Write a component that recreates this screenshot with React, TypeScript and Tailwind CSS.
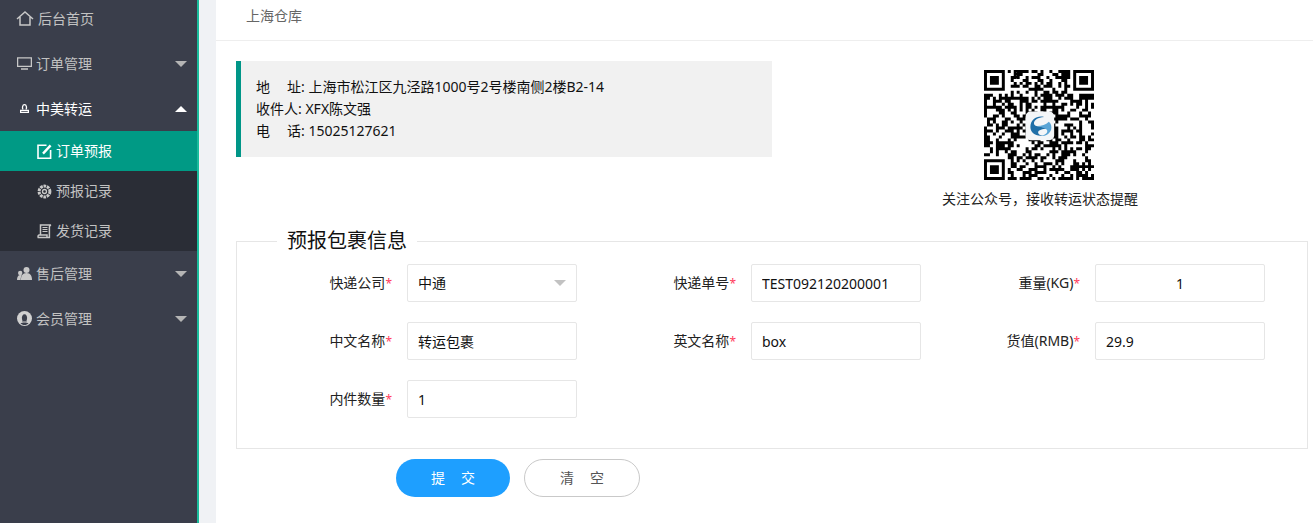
import React from "react";

const fontStack = "font-['Noto_Sans','Noto_Sans_CJK_SC',sans-serif]";

// qr code modules, finder squares are fixed and the rest is filled from a small seed
function qrPath() {
  const size = 37;
  let seed = 20200921;
  let d = "";
  const inFinder = (x: number, y: number) =>
    (x < 8 && y < 8) || (x >= size - 8 && y < 8) || (x < 8 && y >= size - 8);
  for (let y = 0; y < size; y++) {
    for (let x = 0; x < size; x++) {
      seed = (seed * 1103515245 + 12345) & 0x7fffffff;
      if (!inFinder(x, y) && (seed >> 16) % 100 < 55) d += `M${x} ${y}h1v1h-1z`;
    }
  }
  return d;
}

function Finder({ x, y }: { x: number; y: number }) {
  return <path d={`M${x} ${y}h7v7h-7zM${x + 1} ${y + 1}v5h5v-5zM${x + 2} ${y + 2}h3v3h-3z`} fillRule="evenodd" />;
}

function QrCode() {
  return (
    <svg viewBox="0 0 37 37" className="w-[110px] h-[110px] mr-[3px]" fill="#000">
      <path d={qrPath()} />
      <Finder x={0} y={0} />
      <Finder x={30} y={0} />
      <Finder x={0} y={30} />
      <rect x="14" y="14" width="9.6" height="9.6" rx="1.6" fill="#f4f6f8" />
      <path d="M15.6 19.2c0-2.6 2.4-4 4.6-3.4-2 .1-3.4 1-3.4 2.2 0 1.4 3.4.8 4.8 1.8-1-.2-3.4.2-3.4 1.2 0 .6.8 1 1.6 1-2.3.4-4.2-.8-4.2-2.8z" fill="#1f6fa8" />
      <path d="M21.8 17.4c.8.6 1 1.6.8 2.6-.5 1.6-2.2 2.4-3.8 2.2 1.8-.2 2.8-1 2.4-2-.6-.8-2-1-3.2-1.4 1.4 0 2.8-.4 3.8-1.4z" fill="#5aa5d6" />
    </svg>
  );
}

function Triangle({ up, color = "#b5b5b5" }: { up?: boolean; color?: string }) {
  return up ? (
    <svg viewBox="0 0 12 6" className="w-3 h-[6px]" fill={color}>
      <path d="M6 0l6 6H0z" />
    </svg>
  ) : (
    <svg viewBox="0 0 12 6" className="w-3 h-[6px]" fill={color}>
      <path d="M0 0h12L6 6z" />
    </svg>
  );
}

function HomeIcon() {
  return (
    <svg viewBox="0 0 18 15" className="w-[18px] h-[15px] -ml-px" fill="none" stroke="#c8c8c8" strokeWidth="1.5">
      <path d="M1 8l8-7 8 7M4 6v8h10V6" />
    </svg>
  );
}

function MonitorIcon() {
  return (
    <svg viewBox="0 0 15 13" className="w-[15px] h-[13px]" fill="none" stroke="#c8c8c8" strokeWidth="1.3">
      <path d="M.6.8h13.8v8.6H.6zM4 12h7" />
    </svg>
  );
}

function StampIcon() {
  return (
    <svg viewBox="0 0 9 9" className="w-[9px] h-[9px]" fill="none" stroke="#fff" strokeWidth="1.3">
      <path d="M3 5.500C2 4 2.400.7 4.500.7S7 4 6 5.500" />
      <path d="M.6 6.300h7.800v2H.6z" />
    </svg>
  );
}

function EditIcon() {
  return (
    <svg viewBox="0 0 15 15" className="w-[15px] h-[15px]" fill="none" stroke="#fff" strokeWidth="1.6">
      <path d="M9.500 1.200H1v13h12.600V6" />
      <path d="M6 9.600L13.600 1.400" strokeWidth="2.400" />
    </svg>
  );
}

function GearIcon() {
  return (
    <svg viewBox="0 0 15 15" className="w-[15px] h-[15px]" fill="none" stroke="#c8c8c8">
      <circle cx="7.500" cy="7.500" r="5.400" strokeWidth="3" strokeDasharray="2.600 .8" />
      <circle cx="7.500" cy="7.500" r="2" strokeWidth="1.300" />
    </svg>
  );
}

function ScrollIcon() {
  return (
    <svg viewBox="0 0 15 15" className="w-[15px] h-[15px]" fill="none" stroke="#c8c8c8" strokeWidth="1.500">
      <path d="M3.500 11V1h10.500c-1.200.4-1.600 1-1.600 2v10.500H1.200c-.4-1.400 0-2.400.8-2.500H10v2" />
      <path d="M5.500 3.500h5M5.500 5.500h5M5.500 7.500h5" strokeWidth="1.200" />
    </svg>
  );
}

function PeopleIcon() {
  return (
    <svg viewBox="0 0 15 13" className="w-[15px] h-[13px]" fill="#c8c8c8">
      <circle cx="9.500" cy="3" r="3" />
      <path d="M4 13c-.3-4 1.500-7 5.500-7s5.500 3 5.500 7z" />
      <circle cx="3.200" cy="6" r="2.200" />
      <path d="M0 13c0-3 1-5 3.400-5 .6 0 1 .1 1.400.3C4 9.800 3.600 11.200 3.700 13z" />
    </svg>
  );
}

function MemberIcon() {
  return (
    <svg viewBox="0 0 15 15" className="w-[15px] h-[15px]">
      <circle cx="7.500" cy="7.500" r="7.500" fill="#d0d0d0" />
      <path d="M5 10.500c.8-.8.4-1.200 0-2.200-.6-3 .8-5 2.500-5s3.100 2 2.500 5c-.4 1-.8 1.400 0 2.200z" fill="#3a3e4b" />
      <path d="M3.500 12.500c1-.8 2.200-1 4-1s3 .2 4 1c-1 .8-2.400 1.500-4 1.500s-3-.7-4-1.500z" fill="#3a3e4b" />
    </svg>
  );
}

function MenuItem({ icon, label, open, active, iconBox = "w-[19px]" }: { icon: React.ReactNode; label: string; open?: boolean; active?: boolean; iconBox?: string }) {
  return (
    <div className={`h-[45px] flex items-center pl-[17px] pr-[10px] text-sm ${active ? "text-white" : "text-[#c2c2c2]"}`}>
      <span className={`${iconBox} flex items-center justify-start shrink-0`}>{icon}</span>
      <span className="flex-1">{label}</span>
      {open === undefined ? null : <Triangle up={open} color={open ? "#fff" : "#b5b5b5"} />}
    </div>
  );
}

function SubItem({ icon, label, active }: { icon: React.ReactNode; label: string; active?: boolean }) {
  return (
    <div className={`h-10 flex items-center pl-[37px] gap-1 text-sm ${active ? "bg-[#009a85] text-white" : "text-[#c2c2c2]"}`}>
      {icon}
      <span>{label}</span>
    </div>
  );
}

function Sidebar() {
  return (
    <aside className="w-[199px] shrink-0 h-full bg-[#3a3e4b] border-r-2 border-[#1abc9c] overflow-hidden">
      <div className="-mt-1">
        <MenuItem icon={<HomeIcon />} label="后台首页" iconBox="w-[21px]" />
        <MenuItem icon={<MonitorIcon />} label="订单管理" open={false} />
        <MenuItem icon={<span className="pl-[3px] flex"><StampIcon /></span>} label="中美转运" open active />
        <div className="bg-[#2a2d36]">
          <SubItem icon={<EditIcon />} label="订单预报" active />
          <SubItem icon={<GearIcon />} label="预报记录" />
          <SubItem icon={<ScrollIcon />} label="发货记录" />
        </div>
        <MenuItem icon={<PeopleIcon />} label="售后管理" open={false} />
        <MenuItem icon={<MemberIcon />} label="会员管理" open={false} />
      </div>
    </aside>
  );
}

function Field({ label, value, select, center }: { label: string; value?: string; select?: boolean; center?: boolean }) {
  return (
    <div className="flex items-center">
      <label className="w-[115px] text-right text-sm text-[#222] mr-[15px]">
        {label}
        <span className="text-xs text-[#ff3b5c]">*</span>
      </label>
      {select ? (
        <div className="w-[170px] h-[38px] border border-[#e6e6e6] rounded-[2px] pl-[10px] pr-[10px] flex items-center justify-between text-sm text-[#111]">
          <span>{value}</span>
          <Triangle color="#c2c2c2" />
        </div>
      ) : (
        <input
          readOnly
          value={value}
          className={`w-[170px] h-[38px] border border-[#e6e6e6] rounded-[2px] px-[10px] text-sm text-[#111] outline-none ${center ? "text-center" : ""}`}
        />
      )}
    </div>
  );
}

function InfoLine({ a, b, value }: { a: string; b?: string; value: string }) {
  return (
    <div>
      {a}
      {b ? <span className="inline-block w-[17px]" /> : null}
      {b}: {value}
    </div>
  );
}

export default function App() {
  return (
    <div className={`h-[523px] w-[1313px] flex overflow-hidden bg-white ${fontStack}`}>
      <Sidebar />
      <div className="w-[17px] shrink-0 bg-[#f0f2f5]" />
      <main className="flex-1 min-w-0">
        <div className="h-[41px] border-b border-[#eeeeee] pl-[30px] pt-[5px] text-sm leading-[22px] text-[#666]">上海仓库</div>
        <div className="pl-5 pr-[5px]">
          <div className="flex mt-5">
            <div className="w-[536px] h-[96px] border-l-[5px] border-[#009688] bg-[#f1f1f1] pl-[15px] py-[15px] text-sm leading-[22px] text-[#111]">
              <InfoLine a="地" b="址" value="上海市松江区九泾路1000号2号楼南侧2楼B2-14" />
              <InfoLine a="收件人" value="XFX陈文强" />
              <InfoLine a="电" b="话" value="15025127621" />
            </div>
            <div className="flex-1 flex flex-col items-center pt-[9px]">
              <QrCode />
              <p className="mt-[9px] text-sm leading-5 text-[#222]">关注公众号，接收转运状态提醒</p>
            </div>
          </div>
          <fieldset className="mt-[18px] h-[222px] border border-[#e6e6e6]">
            <legend className="ml-10 px-[10px] text-[20px] leading-7 text-[#111]">预报包裹信息</legend>
            <div className="grid grid-cols-[344px_344px_1fr] gap-y-5 pl-[40px] pt-[9px]">
              <Field label="快递公司" value="中通" select />
              <Field label="快递单号" value="TEST092120200001" />
              <Field label="重量(KG)" value="1" center />
              <Field label="中文名称" value="转运包裹" />
              <Field label="英文名称" value="box" />
              <Field label="货值(RMB)" value="29.9" />
              <Field label="内件数量" value="1" />
            </div>
          </fieldset>
          <div className="flex gap-[14px] ml-[160px] mt-[10px]">
            <button className="w-[114px] h-[38px] rounded-full bg-[#1e9fff] text-white text-sm flex items-center justify-center gap-4">
              <span>提</span>
              <span>交</span>
            </button>
            <button className="w-[116px] h-[38px] rounded-full border border-[#c9c9c9] bg-white text-[#555] text-sm flex items-center justify-center gap-4">
              <span>清</span>
              <span>空</span>
            </button>
          </div>
        </div>
      </main>
    </div>
  );
}
